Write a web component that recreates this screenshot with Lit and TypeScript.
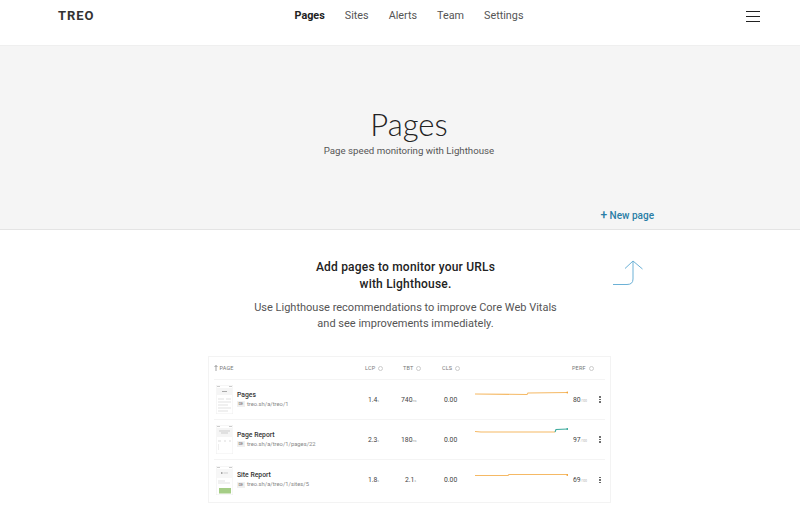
import { LitElement, html, css, svg } from 'lit';
import { customElement } from 'lit/decorators.js';

interface Row {
  name: string;
  url: string;
  lcp: string;
  tbt: string;
  tbtUnit: string;
  perf: string;
  line: string;
  tail?: string;
  end: number;
  thumb: string;
}

const ROWS: Row[] = [
  { name: 'Pages', url: 'treo.sh/a/treo/1', lcp: '1.4', tbt: '740', tbtUnit: 'ms', perf: '80',
    line: 'M0 6L52 6.500L53 5L93 4.500', end: 4.5, thumb: 'list' },
  { name: 'Page Report', url: 'treo.sh/a/treo/1/pages/22', lcp: '2.3', tbt: '180', tbtUnit: 'ms', perf: '97',
    line: 'M0 3.500L6 4L80 4', tail: 'M80 4L81 1.500L93 1', end: 1, thumb: 'report' },
  { name: 'Site Report', url: 'treo.sh/a/treo/1/sites/5', lcp: '1.8', tbt: '2.1', tbtUnit: 's', perf: '69',
    line: 'M0 7.500L33 7.500L34 6.500L93 6.500', end: 7, thumb: 'site' },
];

@customElement('app-root')
export class AppRoot extends LitElement {
  static styles = css`
    :host {
      display: block;
      width: 800px;
      height: 530px;
      overflow: hidden;
      background: #fff;
      font-family: Roboto, 'Noto Sans', sans-serif;
      color: #222;
    }

    header {
      display: grid;
      grid-template-columns: 1fr auto 1fr;
      height: 46px;
      padding: 7px 40px 0 58px;
      box-sizing: border-box;
      border-bottom: 1px solid #efefef;
    }

    .logo {
      font-size: 13px;
      font-weight: 700;
      letter-spacing: 0.9px;
      line-height: 18px;
      color: #333;
    }

    nav {
      display: flex;
      gap: 20px;
      font-size: 10.800px;
      line-height: 18px;
      color: #555;
    }

    nav .active {
      font-weight: 700;
      color: #222;
    }

    .burger {
      justify-self: end;
      width: 14px;
      height: 11px;
      margin-top: 4px;
      border-top: 1px solid #222;
      border-bottom: 1px solid #222;
      box-sizing: border-box;
      display: flex;
      align-items: center;
    }

    .burger span {
      display: block;
      width: 100%;
      height: 1px;
      background: #222;
    }

    .hero {
      height: 184px;
      box-sizing: border-box;
      background: #f5f5f5;
      border-bottom: 1px solid #e4e4e4;
      display: flex;
      flex-direction: column;
      align-items: center;
      padding: 60px 0 0 18px;
    }

    h1 {
      margin: 0;
      font-family: Lato, Roboto, sans-serif;
      font-size: 31px;
      font-weight: 300;
      line-height: 36px;
      color: #222;
    }

    .sub {
      font-size: 9.700px;
      line-height: 14px;
      margin-top: 2px;
      color: #555;
    }

    .new {
      align-self: flex-end;
      margin: 50px 146px 0 0;
      font-size: 10px;
      font-weight: 500;
      line-height: 14px;
      color: #2a7da6;
    }

    .new b {
      font-size: 12px;
      font-weight: 500;
      line-height: 14px;
    }

    main {
      position: relative;
      display: flex;
      flex-direction: column;
      align-items: center;
      padding: 29px 0 0 18px;
    }

    .arrow {
      position: absolute;
      left: 612px;
      top: 30px;
    }

    .copy {
      margin-right: 7px;
      text-align: center;
    }

    h2 {
      margin: 0;
      font-size: 12px;
      font-weight: 500;
      line-height: 17px;
      letter-spacing: 0.2px;
      color: #222;
    }

    .lead {
      margin: 7px 0 0;
      font-size: 11px;
      line-height: 16px;
      color: #555;
    }

    .card {
      width: 403px;
      height: 147px;
      margin: 24px 0 0 1px;
      box-sizing: border-box;
      border: 1px solid #f3f3f3;
      padding: 0 5px;
    }

    .head,
    .row {
      display: grid;
      grid-template-columns: 151px 38px 39px 33px 97px 27px 1fr;
      align-items: center;
      box-sizing: border-box;
      border-bottom: 1px solid #f4f4f4;
    }

    .head {
      height: 23px;
      font-size: 5.500px;
      letter-spacing: 0.15px;
      color: #777;
    }

    .head span {
      display: flex;
      align-items: center;
      gap: 3px;
    }

    .head span svg {
      margin-right: -1.500px;
    }

    .head i {
      width: 5px;
      height: 5px;
      box-sizing: border-box;
      border: 0.5px solid #ccc;
      border-radius: 50%;
    }

    .row {
      height: 40px;
      font-size: 6.800px;
      color: #444;
    }

    .row:last-child {
      border-bottom: none;
    }

    .page {
      display: flex;
      align-items: center;
      gap: 4px;
      padding-left: 2px;
    }

    .thumb {
      width: 17px;
      height: 29px;
      flex: none;
    }

    .name {
      font-size: 6.800px;
      font-weight: 500;
      line-height: 9px;
      color: #333;
    }

    .url {
      display: flex;
      align-items: center;
      gap: 2px;
      font-size: 5.800px;
      line-height: 9px;
      color: #888;
    }

    .url em {
      font-style: normal;
      font-size: 4px;
      font-weight: 500;
      line-height: 6px;
      padding: 0 1.500px;
      background: #f0f0f0;
      color: #777;
    }

    small {
      font-size: 3px;
      color: #aaa;
    }

    .lcp {
      padding-left: 3px;
    }

    .tbt {
      width: 15px;
      margin-left: -2px;
      text-align: right;
    }

    .cls {
      padding-left: 2px;
    }

    .spark {
      display: block;
      margin-bottom: 12px;
    }

    .perf {
      padding-left: 1px;
    }

    .more {
      display: flex;
      flex-direction: column;
      gap: 1px;
    }

    .more s {
      display: block;
      width: 1.500px;
      height: 1.500px;
      border-radius: 50%;
      background: #555;
    }
  `;

  private renderThumb(kind: string) {
    return html`<svg class="thumb" viewBox="0 0 17 29">
      <rect x=".25" y=".25" width="16.500" height="28.500" fill="#fff" stroke="#eee" stroke-width=".5" />
      <rect x="1" y="1" width="3" height="1" fill="#ccc" />
      <rect x="13" y="1" width="3" height="1" fill="#ccc" />
      ${kind === 'list'
        ? svg`<rect x="1" y="3" width="15" height="7" fill="#f5f5f5" />
            <rect x="6" y="6" width="5" height="1" fill="#aaa" />
            <path d="M2 14H8M10 14H15M2 17H15M2 20H12M2 23H15M2 26H12" stroke="#ccc" stroke-width=".6" />`
        : kind === 'report'
          ? svg`<rect x="1" y="3" width="15" height="9" fill="#f5f5f5" />
              <path d="M3 6H14M5 8H12" stroke="#bbb" stroke-width=".7" />
              <path d="M2 16H5M8 16H10M13 16H15" stroke="#ccc" stroke-width=".7" />
              <rect x="2" y="19" width=".5" height="6" fill="#ddd" />`
          : svg`<rect x="1" y="3" width="15" height="9" fill="#f7f7f7" />
              <path d="M5 7H6.500" stroke="#333" stroke-width=".8" />
              <path d="M7.500 7H12" stroke="#bbb" stroke-width=".7" />
              <path d="M2 15H9M2 17H14" stroke="#ccc" stroke-width=".6" />
              <rect x="3" y="22" width="12" height="5.500" fill="#a5cd86" />`}
    </svg>`;
  }

  private renderRow(r: Row) {
    return html`<div class="row">
      <div class="page">
        ${this.renderThumb(r.thumb)}
        <div>
          <div class="name">${r.name}</div>
          <div class="url"><em>DE</em>${r.url}</div>
        </div>
      </div>
      <div class="lcp">${r.lcp}<small>s</small></div>
      <div class="tbt">${r.tbt}<small>${r.tbtUnit}</small></div>
      <div class="cls">0.00</div>
      <svg class="spark" width="93" height="12" viewBox="0 0 93 12" fill="none">
        <path d=${r.line} stroke="#f5b965" stroke-width="1.100" />
        ${r.tail ? svg`<path d=${r.tail} stroke="#3aa99b" stroke-width="1.100" />` : ''}
        <circle cx="92.400" cy=${r.end} r="1" fill=${r.tail ? '#3aa99b' : '#f2a53c'} />
      </svg>
      <div class="perf">${r.perf}<small>/100</small></div>
      <div class="more"><s></s><s></s><s></s></div>
    </div>`;
  }

  render() {
    return html`
      <header>
        <div class="logo">TREO</div>
        <nav>
          <span class="active">Pages</span>
          <span>Sites</span>
          <span>Alerts</span>
          <span>Team</span>
          <span>Settings</span>
        </nav>
        <div class="burger"><span></span></div>
      </header>
      <section class="hero">
        <h1>Pages</h1>
        <div class="sub">Page speed monitoring with Lighthouse</div>
        <div class="new"><b>+</b> New page</div>
      </section>
      <main>
        <svg class="arrow" width="32" height="26" viewBox="0 0 32 26" fill="none" stroke="#6cb1d6" stroke-width="1">
          <path d="M1 24.500H15Q21 24.500 21 19V1" />
          <path d="M13 8.500L21 1L30.500 9" />
        </svg>
        <div class="copy">
          <h2>Add pages to monitor your URLs<br />with Lighthouse.</h2>
          <p class="lead">
            Use Lighthouse recommendations to improve Core Web Vitals<br />and see improvements immediately.
          </p>
        </div>
        <div class="card">
          <div class="head">
            <span>
              <svg width="4" height="6" viewBox="0 0 4 6" fill="none" stroke="#666" stroke-width=".6">
                <path d="M2 6V.5M.5 2L2 .5L3.500 2" />
              </svg>
              PAGE
            </span>
            <span>LCP <i></i></span>
            <span>TBT <i></i></span>
            <span>CLS <i></i></span>
            <span></span>
            <span>PERF <i></i></span>
            <span></span>
          </div>
          ${ROWS.map((r) => this.renderRow(r))}
        </div>
      </main>
    `;
  }
}
